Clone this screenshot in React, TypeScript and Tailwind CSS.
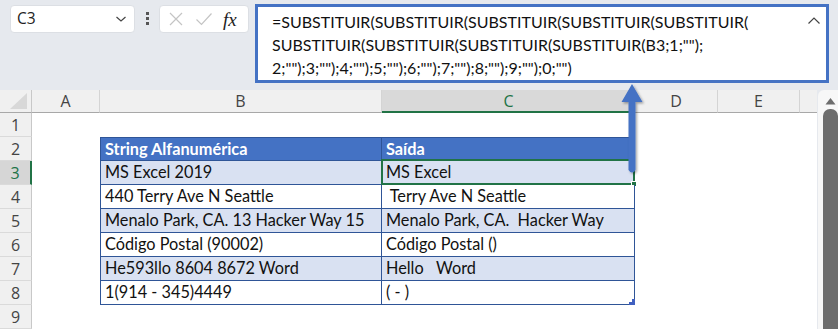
import React from "react";

const cellFont = { fontFamily: "Lato, 'Open Sans', sans-serif" };

const rows = [
  { n: 1 },
  { n: 2, b: "String Alfanumérica", c: "Saída", head: true },
  { n: 3, b: "MS Excel 2019", c: "MS Excel", band: true, sel: true },
  { n: 4, b: "440 Terry Ave N Seattle", c: "\u00a0Terry Ave N Seattle" },
  { n: 5, b: "Menalo Park, CA. 13 Hacker Way 15", c: "Menalo Park, CA.\u00a0\u00a0Hacker Way", band: true },
  { n: 6, b: "Código Postal (90002)", c: "Código Postal ()" },
  { n: 7, b: "He593llo 8604 8672 Word", c: "Hello\u00a0\u00a0\u00a0Word", band: true },
  { n: 8, b: "1(914 - 345)4449", c: "( - )", last: true },
  { n: 9 },
];

function Row({ r }: { r: any }) {
  const inTable = !!r.b;
  const sel = !!r.sel;
  const bg = r.head ? "bg-[#4472c4]" : r.band ? "bg-[#d9e1f2]" : "bg-white";
  const txt = r.head ? "text-white font-bold" : "text-[#111]";
  return (
    <div className="flex h-[24px]">
      <div
        className={`w-[32px] shrink-0 flex items-center justify-center text-[16px] ${
          sel
            ? "bg-[#d6d6d6] text-[#217346] border-r-2 border-r-[#217346]"
            : "bg-[#f0f0f0] text-[#444] border-r border-r-[#c8c8c8]"
        } border-b border-b-[#dadada]`}
        style={{ fontFamily: "'Open Sans', sans-serif" }}
      >
        {r.n}
      </div>
      <div className="w-[68px] shrink-0 bg-white" />
      {inTable ? (
        <>
          <div
            className={`w-[282px] shrink-0 ${bg} ${txt} border-l border-r border-b border-[#2f5597] ${
              r.head ? "border-t" : ""
            } flex items-center pl-[4px] text-[16.3px] whitespace-nowrap overflow-hidden`}
            style={cellFont}
          >
            {r.b}
          </div>
          <div
            className={`relative w-[253px] shrink-0 ${bg} ${txt} border-r border-b border-[#2f5597] ${
              r.head ? "border-t" : ""
            } flex items-center pl-[4px] text-[16.3px] whitespace-nowrap`}
            style={cellFont}
          >
            {r.c}
            {sel && (
              <div className="absolute left-[-1px] top-[-2px] right-[-1px] bottom-[-1px] border-2 border-[#217346]">
                <div className="absolute right-[-4px] bottom-[-4px] w-[6px] h-[6px] bg-[#217346] border border-white" />
              </div>
            )}
            {r.last && (
              <div className="absolute right-[-1px] bottom-[-1px] w-[6px] h-[6px] bg-[#4060c0]" style={{ clipPath: "polygon(100% 0,100% 100%,0 100%,0 50%,50% 50%,50% 0)" }} />
            )}
          </div>
        </>
      ) : (
        <>
          <div className="w-[282px] shrink-0 bg-white" />
          <div className="w-[253px] shrink-0 bg-white" />
        </>
      )}
      <div className="flex-1 bg-white" />
    </div>
  );
}

export default function App() {
  return (
    <div className="relative w-[838px] h-[329px] overflow-hidden bg-[#e6e9ee] flex flex-col">
      {/* top bar */}
      <div className="h-[90px] shrink-0 flex items-start">
        <div
          className="mt-[5px] ml-[10px] w-[125px] h-[28px] bg-white rounded-[4px] border border-[#dcdfe4] flex items-center pl-[6px] pr-[6px] text-[15.5px] text-[#222]"
          style={{ fontFamily: "'Open Sans', sans-serif" }}
        >
          <span className="flex-1">C3</span>
          <svg width="12" height="8" viewBox="0 0 12 8" className="mr-[1px]">
            <path d="M1.5 2 L6 6 L10.5 2" fill="none" stroke="#444" strokeWidth="1.2" />
          </svg>
        </div>
        <div className="mt-[12px] ml-[10px] w-[4px] flex flex-col gap-[2px] items-center">
          <div className="w-[3px] h-[3px] bg-[#555]" />
          <div className="w-[3px] h-[3px] bg-[#555]" />
          <div className="w-[3px] h-[3px] bg-[#555]" />
        </div>
        <div className="mt-[5px] ml-[10px] w-[90px] h-[28px] bg-white rounded-[4px] border border-[#dcdfe4] flex items-center pl-[8px] pr-[4px]">
          <svg width="16" height="16" viewBox="0 0 16 16">
            <path d="M2 2 L14 14 M14 2 L2 14" stroke="#c4c4c4" strokeWidth="1.2" />
          </svg>
          <svg width="18" height="16" viewBox="0 0 18 16" className="ml-[11px]">
            <path d="M1.5 8.5 L6.5 13.5 L16.5 2.5" fill="none" stroke="#c4c4c4" strokeWidth="1.2" />
          </svg>
          <span
            className="ml-[10px] text-[19px] italic text-[#222] leading-none"
            style={{ fontFamily: "'Liberation Serif', serif" }}
          >
            fx
          </span>
        </div>
        <div className="relative mt-[4px] ml-[6px] w-[574px] h-[79px] bg-white border-[3px] border-[#4472c4] pl-[14px] pt-[3px]">
          <div
            className="text-[16px] leading-[23px] text-[#111] whitespace-pre"
            style={cellFont}
          >
            {"=SUBSTITUIR(SUBSTITUIR(SUBSTITUIR(SUBSTITUIR(SUBSTITUIR(\nSUBSTITUIR(SUBSTITUIR(SUBSTITUIR(SUBSTITUIR(B3;1;\"\");\n2;\"\");3;\"\");4;\"\");5;\"\");6;\"\");7;\"\");8;\"\");9;\"\");0;\"\")"}
          </div>
          <svg width="14" height="9" viewBox="0 0 14 9" className="absolute right-[5px] top-[9px]">
            <path d="M1.5 7.5 L7 2 L12.5 7.5" fill="none" stroke="#444" strokeWidth="1.2" />
          </svg>
        </div>
      </div>

      {/* sheet */}
      <div className="flex-1 flex">
        <div className="w-[817px] shrink-0 flex flex-col">
          {/* column headers */}
          <div
            className="flex h-[23px] shrink-0 bg-[#f0f0f0] text-[16px] text-[#444]"
            style={{ fontFamily: "'Open Sans', sans-serif" }}
          >
            <div className="w-[32px] shrink-0 border-r border-r-[#c8c8c8] border-b border-b-[#a8a8a8] relative">
              <svg width="20" height="18" viewBox="0 0 20 18" className="absolute right-[3px] bottom-[2px]">
                <path d="M19 1 L19 17 L2 17 Z" fill="#d8d8d8" />
              </svg>
            </div>
            <div className="w-[68px] shrink-0 flex items-center justify-center border-r border-r-[#d4d4d4] border-b border-b-[#a8a8a8]">A</div>
            <div className="w-[282px] shrink-0 flex items-center justify-center border-r border-r-[#d4d4d4] border-b border-b-[#a8a8a8]">B</div>
            <div className="w-[253px] shrink-0 flex items-center justify-center bg-[#d9d9d9] text-[#217346] border-b-2 border-b-[#217346]">C</div>
            <div className="w-[83px] shrink-0 flex items-center justify-center border-r border-r-[#d4d4d4] border-b border-b-[#a8a8a8]">D</div>
            <div className="w-[82px] shrink-0 flex items-center justify-center border-r border-r-[#d4d4d4] border-b border-b-[#a8a8a8]">E</div>
            <div className="flex-1 border-b border-b-[#a8a8a8]" />
          </div>
          {rows.map((r) => (
            <Row key={r.n} r={r} />
          ))}
        </div>
        {/* scrollbar */}
        <div className="flex-1 ml-[1px] bg-[#f7f7f7] rounded-tl-[6px] flex flex-col items-end">
          <div className="w-[15px] flex justify-center pt-[7px] mr-[0px]">
            <svg width="11" height="8" viewBox="0 0 11 8">
              <path d="M0.5 7.5 L5.5 1 L10.5 7.5 Z" fill="#6d6d6d" />
            </svg>
          </div>
          <div className="mt-[4px] w-[15px] flex-1 bg-[#6d6d6d] rounded-t-[7px]" />
        </div>
      </div>

      {/* arrow overlay */}
      <svg
        width="30"
        height="100"
        viewBox="0 0 30 100"
        className="absolute left-[618px] top-[82px]"
      >
        <defs>
          <filter id="sh" x="-50%" y="-20%" width="200%" height="140%">
            <feDropShadow dx="1.5" dy="1.5" stdDeviation="1.2" floodColor="#000" floodOpacity="0.35" />
          </filter>
        </defs>
        <g filter="url(#sh)">
          <path d="M14 2 L24.5 20 L17.5 20 L17.5 88 Q14 93 10.5 88 L10.5 20 L3.5 20 Z" fill="#4472c4" />
        </g>
      </svg>
    </div>
  );
}
